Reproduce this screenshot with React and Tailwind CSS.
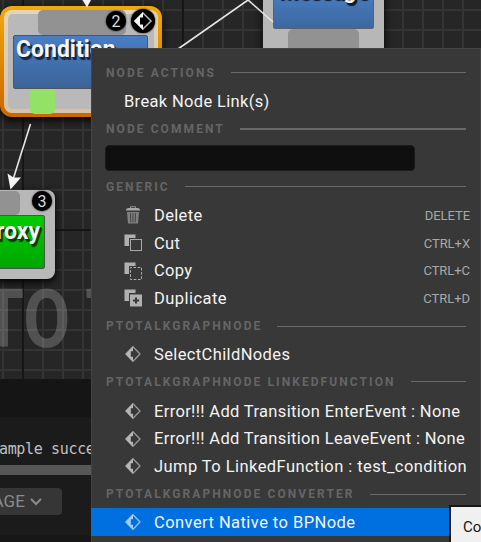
import React from 'react';

const roboto = "font-['Roboto','Liberation_Sans',sans-serif]";

function Diamond({ bright = false }) {
  return (
    <svg width="18" height="18" viewBox="0 0 18 18" fill="none">
      <path d="M9 1.8 L16 9 L9 16.2 L2 9 Z" stroke={bright ? '#8fc2f5' : '#999999'} strokeWidth="1.3" />
      <path d="M9 1.2 L1.4 9 L9 16.8 V11.8 H6.8 V6.2 H9 Z" fill={bright ? '#a3cdf8' : '#b5b5b5'} />
    </svg>
  );
}

function Trash() {
  return (
    <svg width="18" height="20" viewBox="0 0 18 20" fill="none">
      <path d="M6.5 3 V1.7 H11.5 V3" stroke="#929292" />
      <path d="M2 5.5 Q2 3 4.5 3 H13.5 Q16 3 16 5.5 Z" fill="#a8a8a8" />
      <path d="M3 7 H15 L14 18.5 H4 Z" fill="#808080" />
      <path d="M6.5 8.2 L6.8 17.4 M9 8.2 V17.4 M11.5 8.2 L11.2 17.4" stroke="#424242" strokeWidth="1" />
    </svg>
  );
}

function Squares({ kind }) {
  return (
    <svg width="18" height="18" viewBox="0 0 18 18" fill="none">
      <path d="M0.5 0.5 H11.5 V4 H5 V12 H0.5 Z" fill="#b0b0b0" />
      {kind === 'cut' && <rect x="6.5" y="5.5" width="11" height="11" stroke="#a8a8a8" />}
      {kind === 'copy' && (
        <rect x="6.5" y="5.5" width="11" height="12" stroke="#b0b0b0" strokeDasharray="2.6 1.6" strokeDashoffset="1.2" />
      )}
      {kind === 'duplicate' && (
        <>
          <rect x="6" y="5.5" width="12" height="12" fill="#b0b0b0" />
          <path d="M12 8.5 V14.5 M9 11.5 H15" stroke="#383838" strokeWidth="2" />
        </>
      )}
    </svg>
  );
}

function Header({ children, className = 'h-7', thick = false }) {
  return (
    <div className={`flex shrink-0 items-center pr-[14px] pl-[14px] ${className}`}>
      <span className="text-[12px] leading-none font-bold tracking-[2.08px] whitespace-nowrap text-[#656565]">{children}</span>
      <div className={`ml-[15px] flex-1 bg-[#696969] ${thick ? 'h-[2px]' : 'h-px'}`} />
    </div>
  );
}

function Item({ icon, label, shortcut, className = 'h-7', track = 'tracking-[0.34px]' }) {
  return (
    <div className={`flex shrink-0 items-center pr-[10px] pl-8 ${className}`}>
      {icon && <div className="mr-3 flex w-[18px] shrink-0 justify-center">{icon}</div>}
      <span className={`pt-[2px] text-[16.5px] leading-none whitespace-nowrap text-[#f3f3f3] ${track}`}>{label}</span>
      {shortcut && <span className="ml-auto text-[13px] leading-none tracking-[-0.05px] text-[#a8a8a8]">{shortcut}</span>}
    </div>
  );
}

function Menu() {
  return (
    <div className="absolute top-12 left-[91px] flex h-[494px] w-[390px] flex-col border-t border-r border-l border-[#444444] bg-[#383838] pt-[9px]">
      <Header className="h-[29px]">NODE ACTIONS</Header>
      <Item label="Break Node Link(s)" />
      <Header className="h-[27px]" thick>NODE COMMENT</Header>
      <div className="mt-[3px] ml-[13px] h-[26px] w-[310px] shrink-0 rounded-[4px] border border-[#1c1c1c] bg-[#0f0f0f]" />
      <Header className="mt-px h-[29px]">GENERIC</Header>
      <Item icon={<Trash />} label="Delete" shortcut="DELETE" />
      <Item icon={<Squares kind="cut" />} label="Cut" shortcut="CTRL+X" />
      <Item icon={<Squares kind="copy" />} label="Copy" shortcut="CTRL+C" className="h-[27px]" />
      <Item icon={<Squares kind="duplicate" />} label="Duplicate" shortcut="CTRL+D" track="tracking-[0.45px]" />
      <Header>PTOTALKGRAPHNODE</Header>
      <Item icon={<Diamond />} label="SelectChildNodes" track="tracking-[0.38px]" />
      <Header className="h-[29px] pb-[2px]">PTOTALKGRAPHNODE LINKEDFUNCTION</Header>
      <Item icon={<Diamond />} label="Error!!! Add Transition EnterEvent : None" />
      <Item icon={<Diamond />} label="Error!!! Add Transition LeaveEvent : None" className="h-[27px]" />
      <Item icon={<Diamond />} label="Jump To LinkedFunction : test_condition" track="tracking-[0.43px]" />
      <Header>PTOTALKGRAPHNODE CONVERTER</Header>
      <div className="-mx-px flex h-7 shrink-0 flex-col bg-[#0070e0] pl-px">
        <Item icon={<Diamond bright />} label="Convert Native to BPNode" track="tracking-[0.44px]" />
      </div>
    </div>
  );
}

const minorX = Array.from({ length: 24 }, (_, i) => 3 + i * 20);
const minorY = Array.from({ length: 19 }, (_, i) => 10 + i * 20);

function Grid() {
  return (
    <svg className="absolute top-0 left-0" width="481" height="379">
      {minorX.map((x) => <rect key={x} x={x - 1} y="0" width="2" height="379" fill="#343434" />)}
      {minorY.map((y) => <rect key={y} x="0" y={y - 1} width="481" height="2" fill="#343434" />)}
      {[23, 183, 343].map((x) => <rect key={x} x={x - 1} y="0" width="2" height="379" fill="#161616" />)}
      {[70, 230].map((y) => <rect key={y} x="0" y={y - 1} width="481" height="2" fill="#161616" />)}
    </svg>
  );
}

function Wires() {
  return (
    <svg className="absolute top-0 left-0" width="481" height="379" stroke="#e6e6e6" fill="#f2f2f2">
      <path d="M178 49 L248 0 L273 22" fill="none" strokeWidth="1.6" />
      <path d="M82.500 0 H91 L87 7.500 Z" stroke="none" />
      <path d="M30.500 124 L13.500 178" fill="none" strokeWidth="1.6" />
      <path d="M10.500 189.500 L7.500 173.500 L13.500 177.500 L21 177.500 Z" stroke="none" />
    </svg>
  );
}

function Badge({ children, className }) {
  return (
    <div className={`absolute flex size-5 items-center justify-center rounded-full bg-black pt-px text-[16px] leading-none text-[#dddddd] shadow-[0_0_2px_#000] ${className}`}>
      {children}
    </div>
  );
}

const title = 'absolute leading-none font-bold whitespace-nowrap text-[#f4f4f4]';

export default function App() {
  return (
    <div className={`relative h-[542px] w-[481px] overflow-hidden bg-[#171717] ${roboto}`}>
      <div className="relative h-[379px] overflow-hidden bg-[#262626]">
        <Grid />
        <div className="absolute top-[274px] left-[-18px] text-[82px] leading-[90px] font-bold whitespace-nowrap text-white/20">
          <span className="inline-block origin-left scale-x-[0.83]">TO T</span>
        </div>

        <div className="absolute top-[-40px] left-[263px] h-[120px] w-[121px] rounded bg-[#b7b7b7] shadow-[0_2px_8px_#000]">
          <div className="absolute top-[30px] left-[10px] h-[39px] w-[101px] rounded-[2px] border border-[#5d6068] bg-linear-to-b from-[#4b7dc2] to-[#3c689f]" />
          <div className="absolute top-[69px] left-[25px] h-[30px] w-[71px] rounded-[5px] bg-[#929292]" />
          <div className={`${title} top-[19px] left-[15px] text-[22.5px] tracking-[-0.3px] [text-shadow:1px_1px_0_#101b2b,2px_2px_0_#101b2b,2px_3px_1px_#101b2b]`}>Message</div>
        </div>

        <div className="absolute top-[6px] left-0 h-[111px] w-[162px] rounded-[12px] bg-linear-to-b from-[#f2a90b] to-[#cc6600] p-[4px] shadow-[0_3px_9px_#000]">
          <div className="relative h-full rounded-[8px] bg-linear-to-b from-[#e4d6b5] to-[#d9c1a8]">
            <div className="absolute inset-[4px] rounded-[5px] bg-[#b9b9b9]" />
            <div className="absolute top-0 left-[34px] h-[25px] w-[88px] rounded-[5px] bg-[#929292]" />
            <div className="absolute top-[25px] left-[9px] h-[54px] w-[135px] rounded-[2px] border border-[#53545a] bg-linear-to-b from-[#4a7dc4] to-[#3b6498]" />
            <div className="absolute top-[79px] left-[26px] h-[25px] w-[25px] rounded-[5px] bg-[#93e267]" />
            <div className={`${title} top-[28px] left-[12px] text-[23px] [text-shadow:1px_1px_0_#132849,2px_2px_0_#132849,2px_3px_1px_#132849]`}>Condition</div>
          </div>
        </div>
        <Badge className="top-[11px] left-[106px]">2</Badge>
        <div className="absolute top-[9px] left-[131px] flex size-6 items-center justify-center rounded-full bg-black shadow-[0_0_2px_#000]">
          <svg width="20" height="20" viewBox="0 0 20 20" fill="none">
            <path d="M10 2 L18 10 L10 18 L2 10 Z" stroke="#b8b8b8" strokeWidth="1.5" />
            <path d="M10 1 L1 10 L10 19 V13.500 H7 V6.500 H10 Z" fill="#f4f4f4" />
          </svg>
        </div>

        <div className="absolute top-[190px] left-[-60px] h-[89px] w-[115px] rounded-[8px] bg-[#b8b8b8] shadow-[0_3px_9px_#000]">
          <div className="absolute top-px left-[20px] h-[24px] w-[60px] rounded-[5px] bg-[#929292]" />
          <div className="absolute top-[25px] left-[8px] h-[54px] w-[97px] rounded-[2px] border border-[#4b554b] bg-linear-to-b from-[#00cc00] to-[#00a600]" />
          <div className={`${title} top-[30px] right-[15px] text-[23px] [text-shadow:1px_1px_0_#073d07,2px_2px_0_#073d07,2px_3px_1px_#073d07]`}>Proxy</div>
        </div>
        <Badge className="top-[191px] left-[32px]">3</Badge>
        <Wires />
      </div>

      <div className="h-[38px] bg-[#151515]" />
      <div className="h-[48px] overflow-hidden bg-[#1b1b1b] pt-[23px] font-['DejaVu_Sans_Mono',monospace] text-[15px] leading-[18px] whitespace-nowrap text-[#c0c0c0]">
        <span className="-ml-px tracking-[-0.35px]">ample success</span>
      </div>
      <div className="h-[10px] bg-[#575757]" />
      <div className="h-[60px] bg-[#1b1b1b] pt-[13px]">
        <div className="flex h-[27px] w-[62px] items-center justify-end rounded-r-[4px] bg-[#363636] pt-px pr-5 text-[17px] text-[#8b8b8b]">
          <span className="tracking-[0.1px]">AGE</span>
          <svg className="-mr-px ml-1 shrink-0" width="14" height="10" fill="none" stroke="#8b8b8b" strokeWidth="2">
            <path d="M2 2 L7 7 L12 2" />
          </svg>
        </div>
      </div>

      <Menu />
      <div className="absolute top-[505px] left-[449px] h-[40px] w-[40px] border-t-2 border-l-2 border-[#171717] bg-[#f0f0f0] pt-[11px] pl-[12px] text-[15px] leading-[18px] text-[#161616]">
        Co
      </div>
    </div>
  );
}
